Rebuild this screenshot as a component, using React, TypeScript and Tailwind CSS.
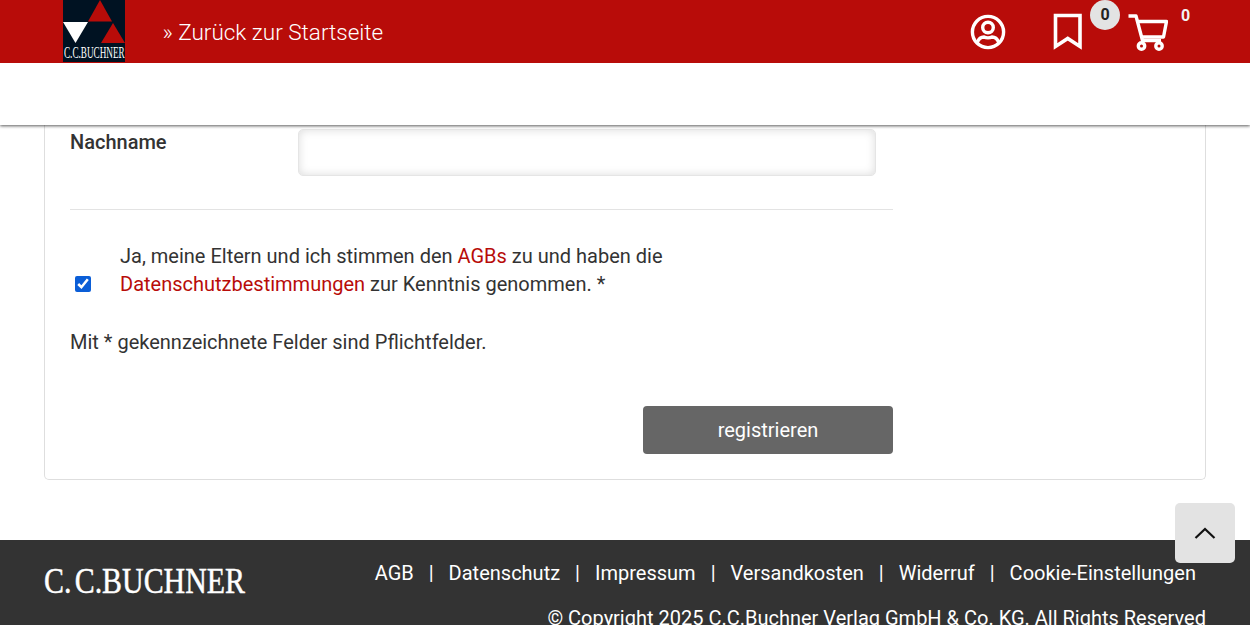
import React from "react";

function UserIcon() {
  return (
    <svg width="38" height="38" viewBox="0 0 38 38" fill="none" stroke="#fff" strokeWidth="3.4">
      <circle cx="19" cy="19" r="15.6" />
      <circle cx="19" cy="14.5" r="5.3" />
      <path d="M8.5 29 C10 25 13 24 15 24 C17 25 21 25 23 24 C25 24 28 25 29.5 29" strokeLinecap="round" />
    </svg>
  );
}

function BookmarkIcon() {
  return (
    <svg width="30" height="38" viewBox="0 0 30 38" fill="none" stroke="#fff" strokeWidth="3.6">
      <path d="M2.5 2.5 H27 V33.5 L14.75 25.5 L2.5 33.5 Z" strokeLinejoin="miter" />
    </svg>
  );
}

function CartIcon() {
  return (
    <svg width="40" height="38" viewBox="0 0 40 38" fill="none" stroke="#fff" strokeWidth="3.4" strokeLinejoin="round">
      <path d="M0.5 3 H8 L14.5 27.5 H33" />
      <path d="M9.5 8.5 H38.5 L35.5 24 H14" />
      <circle cx="13.5" cy="33" r="3.2" />
      <circle cx="31" cy="33" r="3.2" />
    </svg>
  );
}

function Logo() {
  return (
    <div className="relative h-[62px] w-[62px] overflow-hidden bg-[#001222]">
      <svg width="62" height="46" viewBox="0 0 62 46" className="block">
        <polygon points="37,0 49,21.5 25,21.5" fill="#b80c09" />
        <polygon points="0,22 25,22 12.5,43" fill="#ffffff" />
        <polygon points="50,23 62,43 38,43" fill="#b80c09" />
      </svg>
      <div className="absolute bottom-[0px] left-[1px] origin-left scale-x-[0.54] whitespace-nowrap font-['Liberation_Serif',serif] text-[17px] leading-[18px] text-white">
        C.C.BUCHNER
      </div>
    </div>
  );
}

const links = ["AGB", "Datenschutz", "Impressum", "Versandkosten", "Widerruf", "Cookie-Einstellungen"];

export default function App() {
  return (
    <div className="relative flex h-[625px] flex-col overflow-hidden bg-white font-['Roboto',sans-serif] text-[20px] leading-[28px] text-[#333333]">
      <header className="z-10 h-[125px] shrink-0 bg-white shadow-[0_1px_3px_rgba(0,0,0,0.65)]">
        <div className="flex h-[63px] items-start bg-[#b80c09] pl-[63px]">
          <Logo />
          <a className="ml-[37.5px] mt-[17.5px] w-[220.5px] whitespace-nowrap text-[22.5px] font-light leading-[28px] text-white">» Zurück zur Startseite</a>
          <div className="ml-[586px] mt-[13px]"><UserIcon /></div>
          <div className="ml-[46px] mt-[13px]"><BookmarkIcon /></div>
          <div className="relative ml-[45px] mt-[13px]">
            <CartIcon />
            <span className="absolute -left-[38px] -top-[13px] flex h-[30px] w-[30px] items-center justify-center rounded-full bg-[#e3e3e3] text-[16px] font-bold text-[#222222]">0</span>
            <span className="absolute left-[53px] -top-[11px] text-[16px] font-bold text-[#f3f3f3]">0</span>
          </div>
        </div>
      </header>

      <main className="mx-[44px] h-[355px] shrink-0 rounded-b-[5px] border border-t-0 border-[#dedede] px-[25px]">
        <div className="flex items-start pt-[4px]">
          <label className="-mt-[1px] w-[228px] font-medium">Nachname</label>
          <input className="h-[47px] w-[578px] rounded-[5px] border border-[#e5e5e5] bg-white shadow-[inset_0_0_10px_rgba(0,0,0,0.14)] outline-none" />
        </div>
        <div className="mt-[33px] w-[823px] border-t border-[#e3e3e3]" />
        <div className="mt-[32px] flex items-end">
          <input type="checkbox" defaultChecked className="mb-[6px] ml-[5px] h-[16px] w-[16px] accent-[#0b5ed7]" />
          <p className="ml-[29px] w-[600px]">
            Ja, meine Eltern und ich stimmen den <span className="text-[#b80c09]">AGBs</span> zu und haben die{" "}
            <span className="text-[#b80c09]">Datenschutzbestimmungen</span> zur Kenntnis genommen. *
          </p>
        </div>
        <p className="mt-[30px]">Mit * gekennzeichnete Felder sind Pflichtfelder.</p>
        <div className="mt-[50px] flex w-[823px] justify-end">
          <button className="h-[48px] w-[250px] rounded-[4px] bg-[#666666] text-white">registrieren</button>
        </div>
      </main>

      <footer className="mt-[60px] h-[85px] shrink-0 bg-[#333333] pl-[44px] pr-[44px] text-white">
        <div className="flex items-start justify-between">
          <div className="mt-[21px] w-[200px] origin-left scale-x-[0.83] whitespace-nowrap font-['Liberation_Serif',serif] text-[36px] leading-[40px] text-white [word-spacing:-5px] [-webkit-text-stroke:0.5px_white]">
            C. C.BUCHNER
          </div>
          <nav className="mr-[10px] mt-[19px] flex">
            {links.map((l, i) => (
              <span key={l} className="flex">
                {i > 0 && <span className="mx-[15px]">|</span>}
                <a>{l}</a>
              </span>
            ))}
          </nav>
        </div>
        <p className="mt-[3px] text-right">© Copyright 2025 C.C.Buchner Verlag GmbH &amp; Co. KG. All Rights Reserved</p>
      </footer>

      <button className="absolute left-[1175px] top-[503px] flex h-[60px] w-[60px] items-center justify-center rounded-[5px] bg-[#e3e3e3]">
        <svg width="24" height="14" viewBox="0 0 24 14" fill="none" stroke="#111" strokeWidth="2.2"><path d="M2.5 12 L12 3 L21.5 12" /></svg>
      </button>
    </div>
  );
}
